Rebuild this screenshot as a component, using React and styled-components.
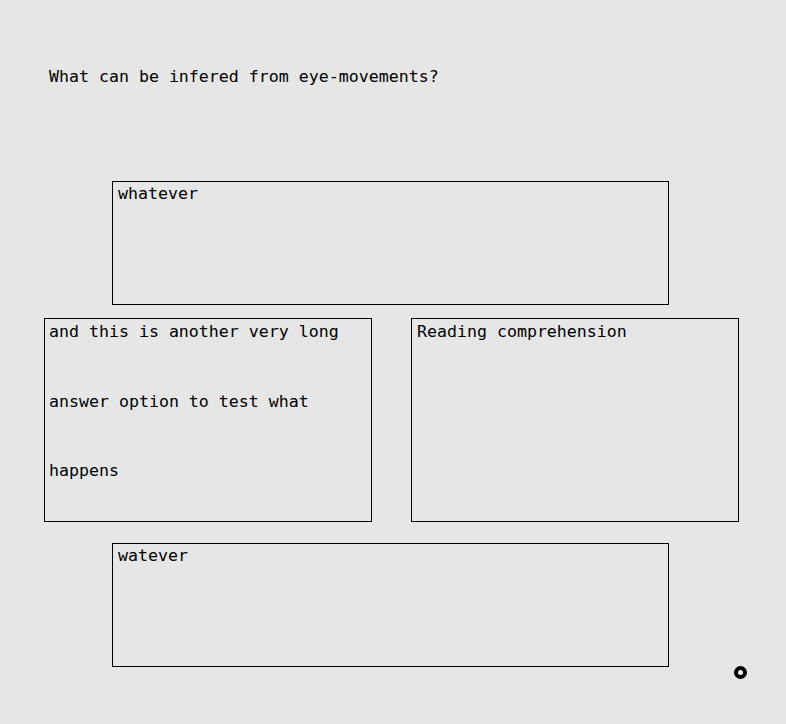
import React from 'react';
import styled, { createGlobalStyle } from 'styled-components';

const GlobalStyle = createGlobalStyle`
  html, body {
    margin: 0;
    padding: 0;
    background: #e6e6e6;
  }
  body {
    font-family: "DejaVu Sans Mono", "Liberation Mono", monospace;
    font-size: 16.6px;
    color: #000;
  }
`;

const answers = [
  { id: 'a', text: 'whatever' },
  { id: 'b', text: 'and this is another very long answer option to test what happens' },
  { id: 'c', text: 'Reading comprehension' },
  { id: 'd', text: 'watever' },
];

export default function App() {
  const [top, left, right, bottom] = answers;
  return (
    <Page>
      <GlobalStyle />
      <Question>What can be infered from eye-movements?</Question>
      <WideRow $gap={95}>
        <Option $wide>
          <OptionText>{top.text}</OptionText>
        </Option>
      </WideRow>
      <HalfRow>
        <Option>
          <OptionText $tall>{left.text}</OptionText>
        </Option>
        <Option $inset={5}>
          <OptionText $tall>{right.text}</OptionText>
        </Option>
      </HalfRow>
      <WideRow $gap={21}>
        <Option $wide>
          <OptionText>{bottom.text}</OptionText>
        </Option>
      </WideRow>
      <GazeDot />
    </Page>
  );
}

const Page = styled.div`
  position: relative;
  width: 786px;
  height: 724px;
  padding-top: 67px;
  box-sizing: border-box;
  overflow: hidden;
`;

const Question = styled.div`
  margin-left: 49px;
  line-height: 19px;
  white-space: pre;
`;

const WideRow = styled.div`
  display: flex;
  padding-left: 112px;
  margin-top: ${(p) => p.$gap}px;
`;

const HalfRow = styled.div`
  display: flex;
  gap: 39px;
  padding-left: 44px;
  margin-top: 13px;
`;

const Option = styled.div`
  box-sizing: border-box;
  width: ${(p) => (p.$wide ? 557 : 328)}px;
  height: ${(p) => (p.$wide ? 124 : 204)}px;
  border: 1px solid #000;
  padding: 2px 5px 0 ${(p) => p.$inset ?? 4}px;
  overflow: hidden;
  cursor: pointer;
`;

const OptionText = styled.div`
  padding-left: ${(p) => (p.$tall ? 0 : 1)}px;
  line-height: ${(p) => (p.$tall ? '69.5px' : 'normal')};
  margin-top: ${(p) => (p.$tall ? -24 : 0)}px;
`;

const GazeDot = styled.div`
  position: absolute;
  left: 734px;
  top: 666px;
  width: 5px;
  height: 5px;
  border: 4px solid #000;
  border-radius: 50%;
  background: #f2f2f2;
`;
